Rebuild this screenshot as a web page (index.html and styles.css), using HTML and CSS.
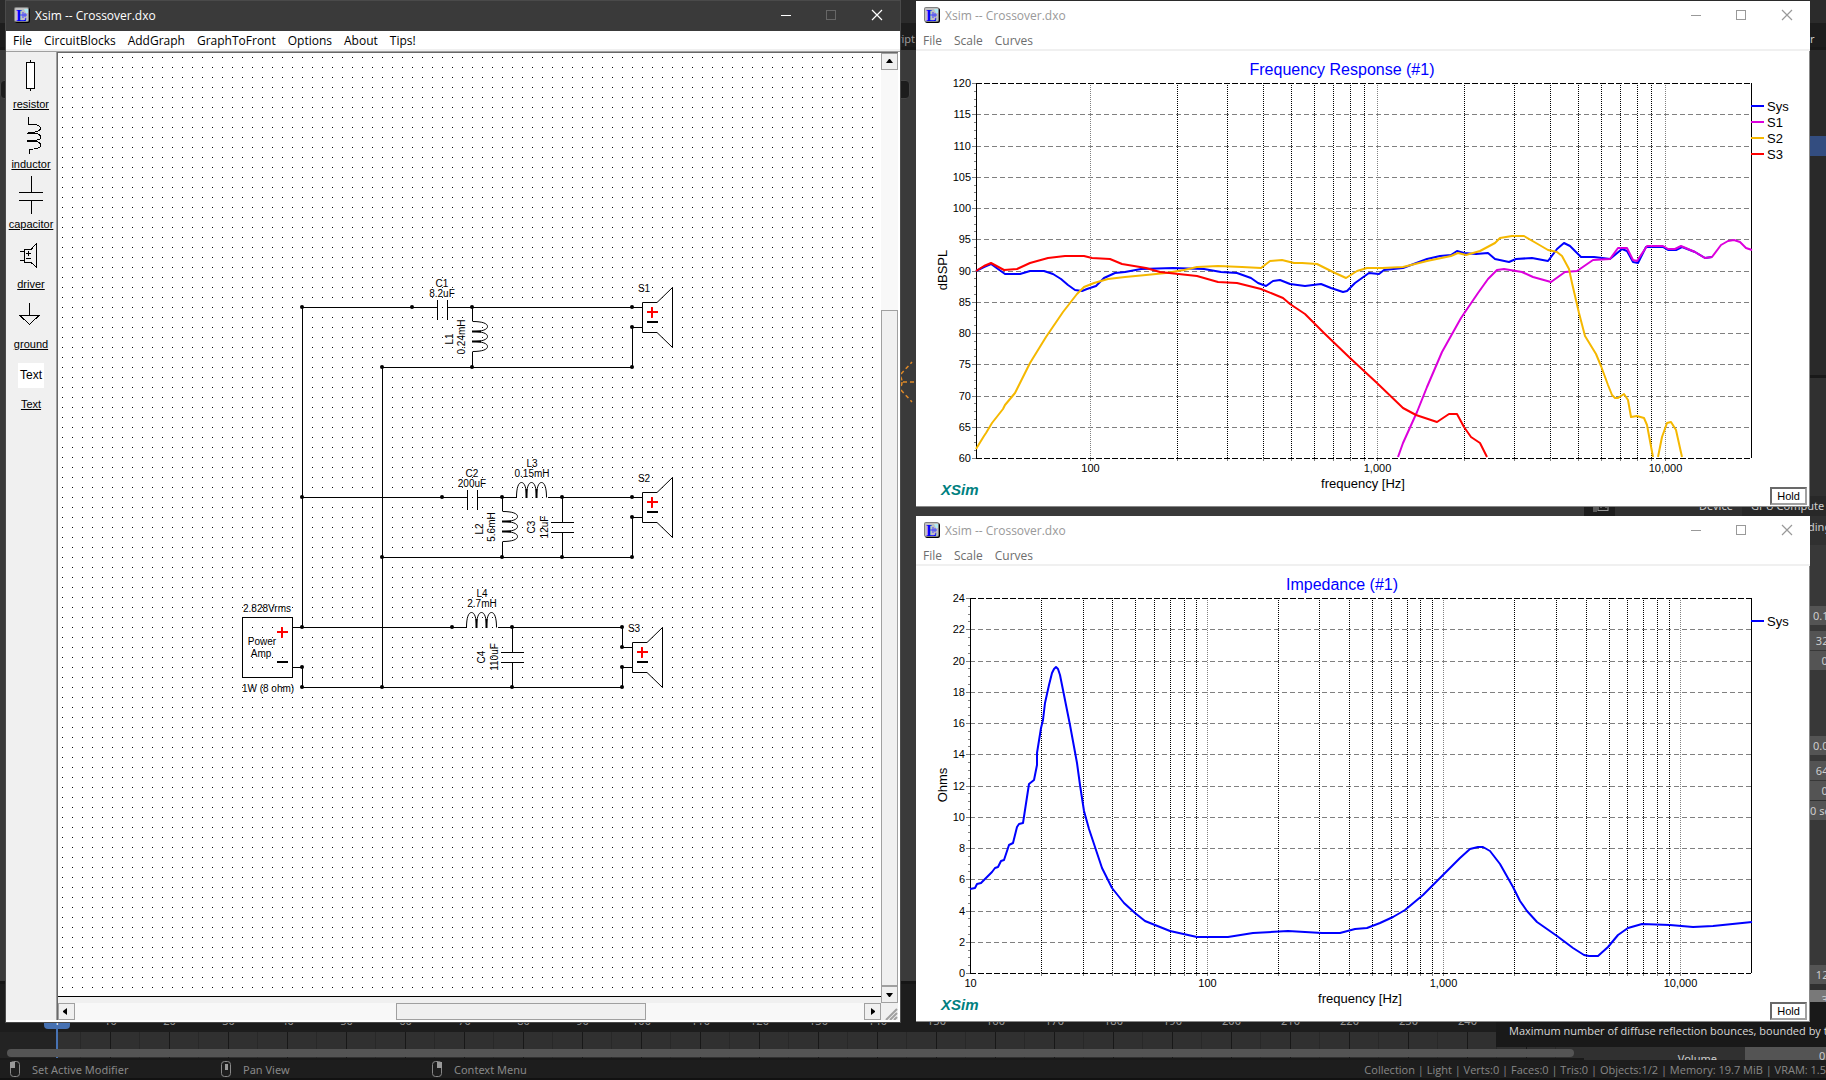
FILE: index.html
```html
<!DOCTYPE html>
<html lang="en">
<head>
  <meta charset="UTF-8">
  <meta name="viewport" content="width=device-width, initial-scale=1.0">
  <title>Xsim -- Crossover.dxo</title>
  <link rel="stylesheet" href="styles.css">
</head>
<body>
  <!-- shared symbols -->
  <svg class="defs" width="0" height="0" aria-hidden="true">
    <symbol id="app-icon" viewBox="0 0 16 16">
      <rect x="1" y="1" width="15" height="15" rx="2" fill="#000"/>
      <rect x="0" y="0" width="15" height="15" rx="2" fill="#808080"/>
      <rect x="1" y="1" width="13" height="13" rx="1" fill="#c0c0c0"/>
      <path d="M10 2h4v4h-2z" fill="#b0ecf4"/>
      <text x="2" y="14" font-family="Liberation Serif, serif" font-weight="bold" font-size="16" fill="#0000ff">L</text>
      <path d="M6 8h7M9 5v6M11 6v4" stroke="#4040ff" fill="none"/>
    </symbol>
    <symbol id="minimize" viewBox="0 0 46 30"><path d="M19 14.5h10" stroke="currentColor" fill="none"/></symbol>
    <symbol id="maximize" viewBox="0 0 46 30"><rect x="18.5" y="9.5" width="9" height="9" stroke="currentColor" fill="none"/></symbol>
    <symbol id="close" viewBox="0 0 46 30"><path d="M18 9l10 10M28 9l-10 10" stroke="currentColor" fill="none" stroke-width="1.2"/></symbol>
    <symbol id="coil" viewBox="0 0 18 32" overflow="visible">
      <path d="M.5 .5c10 0 15 2 15 5s-5 5-15 5M.5 10.5c10 0 15 2 15 5s-5 5-15 5M.5 20.5c10 0 15 2 15 5s-5 5-15 5" fill="none" stroke="#000"/>
      <path d="M0 10.5h9M0 20.5h9" stroke="#000" stroke-width="2"/>
    </symbol>
    <symbol id="speaker" viewBox="0 0 32 62" overflow="visible">
      <path d="M15 15.5H.5V45.5H15L30.5 60.5V.5L15 15.5" fill="none" stroke="#000"/>
      <path d="M5 25h11M10 20v11" stroke="#f00" stroke-width="2"/>
      <path d="M5 35h11" stroke="#000" stroke-width="2"/>
    </symbol>
  </svg>

  <!-- application behind the windows -->
  <div class="desktop">
    <div class="workspace">
      <div class="viewport">
        <div class="topbar"></div>
        <div class="tabs-row"><span class="tab-name">Script</span></div>
        <div class="tool-field"></div>
        <svg class="lamp" viewBox="0 0 60 60" fill="none" stroke="#e08a28" stroke-width="1.500" stroke-dasharray="4 3">
          <path d="M36 30h22M34 22l11-12M34 38l11 12"/>
          <circle cx="24" cy="30" r="11"/>
        </svg>
      </div>
      <div class="properties">
        <div class="topbar"></div>
        <div class="tabs-row"><span class="prop-edge">r</span></div>
        <div class="outliner"><div class="selected-row"></div></div>
        <div class="device-row">
          <svg class="render-icon" viewBox="0 0 30 20" fill="none" stroke="#999"><rect x="13.500" y="5.500" width="10" height="9"/><path d="M11.500 8v8M9.500 10v6M16 12l3-3 3 3"/></svg>
          <span class="device-label">Device</span><span class="device-value">GPU Compute</span>
        </div>
        <div class="panel-heading">Shading</div>
        <div class="group"><div class="prop">0.1</div></div>
        <div class="pair"><div class="prop">&nbsp;32</div><div class="prop">&nbsp;&nbsp;&nbsp;0</div></div>
        <div class="group"><div class="prop">0.0</div></div>
        <div class="pair"><div class="prop">&nbsp;64</div><div class="prop">&nbsp;&nbsp;&nbsp;0</div></div>
        <div class="prop seed">0 seed</div>
        <div class="group last"><div class="prop">&nbsp;12</div></div>
        <div class="prop hover">&nbsp;&nbsp;&nbsp;3</div>
        <div class="volume-row"><span>Volume</span><div class="volume-value">0</div></div>
      </div>
    </div>
    <div class="timeline">
      <div class="ruler" id="ruler"></div>
      <div class="tracks">
        <div class="before-start"></div>
        <div class="playhead"></div>
        <div class="time-scroll"></div>
      </div>
    </div>
    <div class="statusbar">
      <div class="hint"><svg viewBox="0 0 12 18"><rect x="1.500" y="1.500" width="9" height="15" rx="3" fill="none" stroke="#888"/><path d="M1 2h5v6H1z" fill="#999"/></svg>Set Active Modifier</div>
      <div class="hint"><svg viewBox="0 0 12 18"><rect x="1.500" y="1.500" width="9" height="15" rx="3" fill="none" stroke="#888"/><path d="M5 4h3v6H5z" fill="#999"/></svg>Pan View</div>
      <div class="hint"><svg viewBox="0 0 12 18"><rect x="1.500" y="1.500" width="9" height="15" rx="3" fill="none" stroke="#888"/><path d="M6 2h5v6H6z" fill="#999"/></svg>Context Menu</div>
      <div class="stats">Collection | Light | Verts:0 | Faces:0 | Tris:0 | Objects:1/2 | Memory: 19.7 MiB | VRAM: 1.5</div>
    </div>
    <div class="tooltip">Maximum number of diffuse reflection bounces, bounded by total</div>
  </div>

  <!-- circuit window -->
  <section class="window circuit-window">
    <header class="titlebar">
      <svg class="app-icon"><use href="#app-icon"/></svg>
      <span class="title">Xsim -- Crossover.dxo</span>
      <button class="win-btn" aria-label="Minimize"><svg><use href="#minimize"/></svg></button>
      <button class="win-btn disabled" aria-label="Maximize" disabled><svg><use href="#maximize"/></svg></button>
      <button class="win-btn" aria-label="Close"><svg><use href="#close"/></svg></button>
    </header>
    <nav class="menubar">
      <button>File</button><button>CircuitBlocks</button><button>AddGraph</button><button>GraphToFront</button><button>Options</button><button>About</button><button>Tips!</button>
    </nav>
    <div class="circuit-body">
      <aside class="parts">
        <button class="part">
          <svg viewBox="6 53 50 45"><path d="M30.500 60v2M30.500 89v2"/><rect x="26.500" y="62.500" width="8" height="26" fill="#fff"/></svg>
          <span class="part-name">resistor</span>
        </button>
        <button class="part">
          <svg viewBox="6 113 50 45"><path d="M28.500 117v7c8 0 12 2 12 4.500s-4 4-13 4M27 133.500h8M32 133c5 0 9 2 9 4s-4 4-14 4M27 141.500h8M32 141c5 0 9 2 9 4s-4 4-12 4.500v4"/></svg>
          <span class="part-name">inductor</span>
        </button>
        <button class="part">
          <svg viewBox="6 173 50 45"><path d="M31.500 176v16M19 192.500h24M19 200.500h24M31.500 200v14"/></svg>
          <span class="part-name">capacitor</span>
        </button>
        <button class="part">
          <svg viewBox="6 233 50 45"><path d="M20 251.500h5M20 260.500h5M31 249.500h-6.500v13H31L36.500 267V243.500L31 249.500M26 253.500h5M28.500 251v5M26 258.500h5"/></svg>
          <span class="part-name">driver</span>
        </button>
        <button class="part">
          <svg viewBox="6 293 50 45"><path d="M29.500 303v12M20 315.500h19l-9.500 9z"/></svg>
          <span class="part-name">ground</span>
        </button>
        <button class="part">
          <span class="text-icon">Text</span>
          <span class="part-name">Text</span>
        </button>
      </aside>

      <div class="canvas-area">
        <svg class="canvas">
          <defs>
            <pattern id="dots" width="10" height="10" patternUnits="userSpaceOnUse"><rect x="4" y="4" width="1" height="1"/></pattern>
          </defs>
          <rect width="100%" height="100%" fill="url(#dots)"/>
          <g transform="translate(-58 -53)">
            <g class="wires">
              <path d="M302.500 627V307.500H437M448 307.500H642M632.500 327.500H642M632.500 327V367.500H382.500V687M472.500 307V321M472.500 352V367"/>
              <path d="M302 497.500H467M478 497.500H516.500M547.500 497.500H642M632 517.500H642M632.500 517V557.500H382M502.500 497V511M502.500 542V557M562.500 497V522M562.500 533V557"/>
              <path d="M292 627.500H466.500M497.500 627.500H622.500V647.500H632M632 667.500H622.500V687.500H302.500V667.500H292M512.500 627V652M512.500 663V687"/>
              <!-- capacitor plates -->
              <path d="M437.500 300v20M447.500 300v20M467.500 490v20M477.500 490v20M551 522.500h23M551 532.500h23M501 652.500h23M501 662.500h23"/>
              <rect x="242.500" y="617.500" width="50" height="60"/>
            </g>
            <use href="#coil" x="472" y="321" width="18" height="32"/>
            <use href="#coil" x="502" y="511" width="18" height="32"/>
            <use href="#coil" width="18" height="32" transform="translate(516 498) rotate(-90)"/>
            <use href="#coil" width="18" height="32" transform="translate(466 628) rotate(-90)"/>
            <use href="#speaker" x="642" y="287" width="32" height="62"/>
            <use href="#speaker" x="642" y="477" width="32" height="62"/>
            <use href="#speaker" x="632" y="627" width="32" height="62"/>
            <path d="M277 632h11M282 627v11" stroke="#f00" stroke-width="2"/>
            <path d="M277 662h11" stroke="#000" stroke-width="2"/>
            <g id="junctions"></g>
            <g class="labels">
              <text x="442" y="287">C1</text><text x="442" y="297">8.2uF</text>
              <text x="644" y="292">S1</text>
              <text transform="translate(453 339) rotate(-90)">L1</text>
              <text transform="translate(465 337) rotate(-90)">0.24mH</text>
              <text x="472" y="477">C2</text><text x="472" y="487">200uF</text>
              <text x="532" y="467">L3</text><text x="532" y="477">0.15mH</text>
              <text x="644" y="482">S2</text>
              <text transform="translate(483 529) rotate(-90)">L2</text>
              <text transform="translate(495 527) rotate(-90)">5.6mH</text>
              <text transform="translate(535 527) rotate(-90)">C3</text>
              <text transform="translate(548 527) rotate(-90)">12uF</text>
              <text x="482" y="597">L4</text><text x="482" y="607">2.7mH</text>
              <text x="634" y="632">S3</text>
              <text transform="translate(485 657) rotate(-90)">C4</text>
              <text transform="translate(498 657) rotate(-90)">110uF</text>
              <text x="267" y="612">2.828Vrms</text>
              <text x="262" y="645">Power</text><text x="261" y="657">Amp</text>
              <text x="268" y="692">1W (8 ohm)</text>
            </g>
          </g>
        </svg>
        <div class="vscroll">
          <button class="scroll-btn" aria-label="Scroll up"><svg viewBox="0 0 15 15"><path d="M4 9h7l-3-4h-1z"/></svg></button>
          <div class="vthumb"></div>
          <button class="scroll-btn" aria-label="Scroll down"><svg viewBox="0 0 15 15"><path d="M4 6h7l-3 4h-1z"/></svg></button>
        </div>
        <div class="hscroll">
          <button class="scroll-btn" aria-label="Scroll left"><svg viewBox="0 0 15 15"><path d="M8 4v7l-4-3v-1z"/></svg></button>
          <div class="hthumb"></div>
          <button class="scroll-btn" aria-label="Scroll right"><svg viewBox="0 0 15 15"><path d="M6 4v7l4-3v-1z"/></svg></button>
        </div>
        <svg class="grip" viewBox="0 0 17 17"><path d="M5 17L16 6M9 17l7-7M13 17l3-3" stroke="#a0a0a0" stroke-width="2"/></svg>
      </div>
    </div>
  </section>

  <!-- frequency response window -->
  <section class="window graph-window response-window">
    <header class="titlebar">
      <svg class="app-icon"><use href="#app-icon"/></svg>
      <span class="title">Xsim -- Crossover.dxo</span>
      <button class="win-btn" aria-label="Minimize"><svg><use href="#minimize"/></svg></button>
      <button class="win-btn" aria-label="Maximize"><svg><use href="#maximize"/></svg></button>
      <button class="win-btn" aria-label="Close"><svg><use href="#close"/></svg></button>
    </header>
    <nav class="menubar"><button>File</button><button>Scale</button><button>Curves</button></nav>
    <div class="graph-body">
      <svg class="graph" id="response" viewBox="916 51 893 455"></svg>
      <button class="hold">Hold</button>
    </div>
  </section>

  <!-- impedance window -->
  <section class="window graph-window impedance-window">
    <header class="titlebar">
      <svg class="app-icon"><use href="#app-icon"/></svg>
      <span class="title">Xsim -- Crossover.dxo</span>
      <button class="win-btn" aria-label="Minimize"><svg><use href="#minimize"/></svg></button>
      <button class="win-btn" aria-label="Maximize"><svg><use href="#maximize"/></svg></button>
      <button class="win-btn" aria-label="Close"><svg><use href="#close"/></svg></button>
    </header>
    <nav class="menubar"><button>File</button><button>Scale</button><button>Curves</button></nav>
    <div class="graph-body">
      <svg class="graph" id="impedance" viewBox="916 566 893 455"></svg>
      <button class="hold">Hold</button>
    </div>
  </section>

  <script src="script.js"></script>
</body>
</html>
```

FILE: styles.css
```css
* {
  box-sizing: border-box;
}
body {
  margin: 0;
  height: 100vh;
  overflow: hidden;
  background: #1d1d1d;
  font-family: 'Open Sans', 'Noto Sans', sans-serif;
  font-size: 12px;
}
button {
  margin: 0;
  padding: 0;
  border: 0;
  background: none;
  color: inherit;
  font: inherit;
}
svg {
  display: block;
}
.defs {
  position: absolute;
}

/* application behind the windows */
.desktop {
  position: relative;
  display: flex;
  flex-direction: column;
  height: 100vh;
  overflow: hidden;
  color: #ccc;
  font-family: 'Noto Sans', sans-serif;
  font-size: 11px;
}
.workspace {
  flex: 1;
  display: flex;
  min-height: 0;
}
.viewport {
  position: relative;
  flex: 1;
  background: #3a3a3a;
  border-bottom: 3px solid #161616;
  margin-bottom: 76px;
}
.topbar {
  height: 23px;
  background: #2b2b2b;
}
.tabs-row {
  height: 27px;
  background: #1d1d1d;
  border-bottom: 3px solid #191919;
  line-height: 32px;
}
.tab-name {
  display: block;
  width: 915px;
  text-align: right;
  color: #999;
}
.tool-field {
  width: 910px;
  height: 19px;
  margin-top: 30px;
  border: 1px solid #444;
  border-radius: 4px;
  background: #1d1d1d;
}
.lamp {
  position: absolute;
  left: 867px;
  top: 352px;
  width: 60px;
  height: 60px;
}
.properties {
  display: flex;
  flex-direction: column;
  width: 242px;
  overflow: hidden;
  white-space: nowrap;
  background: #303030;
}
.prop-edge {
  padding-left: 226px;
}
.outliner {
  height: 328px;
  padding-top: 86px;
  background: #292929;
  border-bottom: 3px solid #191919;
}
.selected-row {
  height: 20px;
  background: #334d80;
}
.device-row {
  display: flex;
  align-items: center;
  height: 20px;
  margin-top: 118px;
  line-height: 20px;
}
.render-icon {
  width: 31px;
  height: 20px;
  background: #1d1d1d;
  margin-right: 84px;
}
.device-label {
  width: 43px;
}
.device-value {
  flex: 1;
  padding-left: 9px;
  background: #282828;
}
.panel-heading {
  height: 29px;
  padding-left: 205px;
  line-height: 22px;
  background: #303030;
}
.group {
  padding-top: 61px;
  background: #383838;
}
.pair {
  display: flex;
  flex-direction: column;
  gap: 1px;
  padding-top: 6px;
  background: #383838;
}
.pair + .group {
  padding-top: 66px;
}
.prop {
  height: 19px;
  padding-left: 229px;
  line-height: 19px;
  background: #545454;
}
.seed {
  margin-top: 1px;
  padding-left: 226px;
}
.group.last {
  padding-top: 145px;
}
.hover {
  margin-top: 6px;
  background: #797979;
}
.volume-row {
  display: flex;
  flex: 1;
  align-items: flex-end;
  justify-content: flex-end;
  line-height: 18px;
  gap: 28px;
  margin-bottom: -8px;
}
.volume-value {
  width: 81px;
  height: 21px;
  padding-left: 74px;
  background: #545454;
}
.timeline {
  position: relative;
  height: 51px;
  margin-top: -51px;
  width: calc(100% - 242px);
  background: #1d1d1d;
  overflow: hidden;
}
.ruler {
  display: flex;
  height: 23px;
  padding-left: 22px;
  line-height: 23px;
  color: #999;
}
.ruler span {
  flex: none;
  width: 59px;
  text-align: center;
}
.ruler span.current {
  width: 26px;
  height: 20px;
  margin: 0 11px 0 22px;
  border-radius: 4px;
  background: #4772b3;
  color: #fff;
}
.tracks {
  position: relative;
  height: 28px;
  border-bottom: 2px solid #191919;
  background: repeating-linear-gradient(90deg, #181818 0, #181818 1px, #303030 1px, #303030 29px, #282828 29px, #282828 30px, #303030 30px, #303030 59px) 51px 0;
}
.before-start {
  position: absolute;
  width: 57px;
  height: 26px;
  background: #232323;
}
.playhead {
  position: absolute;
  left: 56px;
  top: -4px;
  width: 2px;
  height: 30px;
  background: #4772b3;
}
.time-scroll {
  position: absolute;
  left: 7px;
  right: 10px;
  top: 17px;
  height: 8px;
  border-radius: 4px;
  background: #545454;
}
.statusbar {
  display: flex;
  align-items: center;
  height: 20px;
  padding-left: 9px;
  background: #1d1d1d;
  border-bottom: 2px solid #111;
  color: #888;
  white-space: nowrap;
}
.hint {
  display: flex;
  flex: none;
  align-items: center;
  gap: 11px;
  width: 211px;
}
.hint svg {
  width: 12px;
  height: 18px;
}
.stats {
  margin-left: auto;
  font-family: 'Open Sans', 'Noto Sans', sans-serif;
}
.tooltip {
  position: absolute;
  right: 0;
  bottom: 33px;
  width: 330px;
  height: 45px;
  padding: 20px 0 0 13px;
  overflow: hidden;
  background: #191919;
  color: #d8d8d8;
  font-family: 'Open Sans', 'Noto Sans', sans-serif;
  line-height: 18px;
  white-space: nowrap;
}

/* windows */
.window {
  position: absolute;
  display: flex;
  flex-direction: column;
  background: #fff;
}
.titlebar {
  display: flex;
  align-items: center;
  height: 30px;
  flex: none;
}
.app-icon {
  width: 16px;
  height: 16px;
  margin: 0 5px 2px 8px;
}
.title {
  flex: 1;
  padding-bottom: 2px;
}
.win-btn {
  width: 46px;
  height: 30px;
}
.win-btn svg {
  width: 46px;
  height: 30px;
}
.win-btn.disabled {
  color: #666;
}
.menubar {
  display: flex;
  flex: none;
  gap: 12px;
  height: 20px;
  padding-left: 7px;
  border-bottom: 2px solid #f0f0f0;
  line-height: 20px;
}
.circuit-window {
  left: 5px;
  right: 925px;
  top: 0;
  bottom: 57px;
  border: 1px solid #4a4a4a;
}
.circuit-window .titlebar {
  background: #3a3a3a;
  color: #fff;
}
.circuit-body {
  display: flex;
  flex: 1;
  min-height: 0;
  padding: 0 2px 2px 0;
  border-top: 1px solid #a0a0a0;
}
.parts {
  width: 51px;
  flex: none;
  padding-top: 1px;
  background: #f0f0f0;
  border-right: 1px solid #a0a0a0;
}
.part {
  display: flex;
  flex-direction: column;
  align-items: center;
  width: 50px;
  height: 60px;
  font-family: 'Liberation Sans', Arial, sans-serif;
  font-size: 11px;
  line-height: 13px;
}
.part svg {
  width: 50px;
  height: 45px;
  fill: none;
  stroke: #000;
  shape-rendering: crispEdges;
}
.part-name {
  text-decoration: underline;
}
.text-icon {
  width: 26px;
  height: 25px;
  margin: 10px 0;
  background: #fff;
  font-size: 12px;
  line-height: 24px;
}
.canvas-area {
  display: grid;
  flex: 1;
  grid-template-columns: 1fr 17px;
  grid-template-rows: 1fr 23px;
  min-width: 0;
  background: #f0f0f0;
  border-top: 1px solid #696969;
  border-left: 1px solid #696969;
}
.canvas {
  grid-area: 1 / 1;
  width: 100%;
  height: 100%;
  background: #fff;
  border-bottom: 1px solid #000;
}
.wires {
  fill: none;
  stroke: #000;
  shape-rendering: crispEdges;
}
.labels {
  font-family: 'Liberation Sans', Arial, sans-serif;
  font-size: 10px;
  text-anchor: middle;
}
.vscroll {
  grid-area: 1 / 2;
  display: flex;
  flex-direction: column;
  justify-content: space-between;
  margin-bottom: -6px;
  background: #f8f8f8;
}
.vthumb {
  flex: none;
  height: calc(100% - 274px);
  margin-top: auto;
  border: 1px solid #a0a0a0;
  background: #f0f0f0;
}
.hscroll {
  grid-area: 2 / 1;
  display: flex;
  justify-content: space-between;
  margin-top: 6px;
  background: #f8f8f8;
}
.hthumb {
  width: 250px;
  margin-left: 103px;
  border: 1px solid #a0a0a0;
  background: #f0f0f0;
}
.scroll-btn {
  flex: none;
  width: 17px;
  height: 17px;
  border: 1px solid #a0a0a0;
  background: #f0f0f0;
}
.scroll-btn svg {
  width: 15px;
  height: 15px;
}
.grip {
  grid-area: 2 / 2;
  align-self: end;
  width: 17px;
  height: 17px;
}

.graph-window {
  left: 916px;
  right: 16px;
  height: 506px;
}
.response-window {
  top: 1px;
}
.impedance-window {
  top: 516px;
}
.graph-window .titlebar {
  color: #999;
}
.graph-window .menubar {
  color: #6d6d6d;
}
.graph-body {
  position: relative;
  flex: 1;
  min-height: 0;
  border-right: 1px solid #888;
  border-bottom: 1px solid #888;
}
.graph {
  width: 100%;
  height: 100%;
  font-family: 'Liberation Sans', Arial, sans-serif;
  font-size: 11px;
}
.graph-title {
  font-size: 16px;
  fill: #0000ff;
  text-anchor: middle;
}
.axis-title,
.legend {
  font-size: 13px;
}
.middle {
  text-anchor: middle;
}
.end {
  text-anchor: end;
}
.brand {
  font-size: 15px;
  font-weight: bold;
  font-style: italic;
  fill: #008080;
}
.curve {
  fill: none;
  stroke-width: 2;
  stroke-linejoin: round;
}
.grid {
  shape-rendering: crispEdges;
}
.hold {
  position: absolute;
  right: 2px;
  bottom: 1px;
  width: 37px;
  height: 18px;
  border: 2px solid #a0a0a0;
  border-top-color: #696969;
  border-left-color: #696969;
  background: #fff;
  color: #000;
  font-family: 'Liberation Sans', Arial, sans-serif;
  font-size: 11px;
  line-height: 14px;
}
```

FILE: script.js
```js
const NS = 'http://www.w3.org/2000/svg';

function add(parent, tag, attrs, text) {
  const el = document.createElementNS(NS, tag);
  for (const key in attrs) el.setAttribute(key, attrs[key]);
  if (text !== undefined) el.textContent = text;
  parent.appendChild(el);
  return el;
}

// timeline ruler
const ruler = document.getElementById('ruler');
for (let frame = 0; frame <= 240; frame += 10) {
  const span = document.createElement('span');
  span.textContent = frame === 0 ? 1 : frame;
  if (frame === 0) span.className = 'current';
  ruler.appendChild(span);
}

// wire junctions
const junctions = [
  [302, 307], [412, 307], [472, 307], [632, 307], [632, 327], [382, 367], [472, 367], [632, 367],
  [302, 497], [442, 497], [502, 497], [562, 497], [632, 497], [632, 517], [382, 557], [502, 557], [562, 557], [632, 557],
  [302, 627], [452, 627], [512, 627], [622, 627], [622, 647], [622, 667], [302, 667], [302, 687], [382, 687], [512, 687], [622, 687]
];
junctions.forEach(([x, y]) => {
  add(document.getElementById('junctions'), 'circle', { cx: x, cy: y, r: 2 });
});

const series = {
  sys: '976,271 984,267 991,264 998,269 1005,274 1020,274 1030,271 1044,271 1053,274 1061,279 1068,285 1075,290 1082,291 1087,289 1096,286 1104,278 1115,273 1125,272 1141,269 1173,268 1204,269 1221,272 1237,273 1251,278 1258,283 1266,286 1273,281 1280,280 1290,284 1305,286 1321,284 1331,288 1343,292 1347,291 1355,283 1369,273 1379,274 1384,270 1403,268 1427,259 1440,256 1451,255 1457,251 1464,253 1476,254 1488,253 1495,259 1509,262 1516,259 1532,258 1548,261 1557,249 1564,243 1570,246 1581,257 1594,257 1610,259 1622,249 1627,251 1633,262 1638,263 1646,247 1663,247 1668,250 1676,250 1682,247 1695,252 1705,258 1712,257',
  s1: '1398,457 1403,443 1417,412 1427,387 1442,352 1461,318 1478,293 1488,279 1497,270 1504,269 1522,272 1533,277 1551,282 1565,272 1577,271 1593,260 1610,259 1618,248 1627,248 1633,260 1637,261 1647,246 1663,246 1668,249 1675,249 1681,246 1695,252 1705,258 1712,257 1721,245 1728,241 1734,240 1740,242 1746,248 1752,250',
  s2: '976,449 984,436 986,433 992,423 1003,409 1005,405 1015,393 1022,379 1030,363 1046,337 1063,312 1077,294 1084,287 1094,283 1108,279 1125,277 1146,275 1166,273 1184,270 1197,267 1218,266 1242,267 1261,268 1270,261 1282,260 1294,263 1302,263 1317,264 1333,272 1346,278 1357,271 1367,268 1382,268 1403,267 1427,261 1451,256 1458,253 1466,255 1480,251 1495,243 1500,238 1512,236 1524,236 1536,243 1548,250 1557,252 1562,256 1569,269 1572,283 1579,313 1585,336 1596,354 1601,366 1608,385 1612,395 1615,398 1618,398 1624,394 1628,400 1631,417 1637,416 1644,418 1647,425 1653,457',
  s2tail: '1658,457 1662,437 1667,423 1671,422 1676,430 1682,457',
  s3: '976,271 984,266 991,263 1004,270 1017,269 1030,263 1048,258 1065,256 1084,256 1092,258 1110,259 1122,264 1146,268 1160,272 1197,276 1218,282 1237,283 1261,289 1283,298 1290,304 1305,314 1324,333 1350,358 1377,383 1403,408 1416,415 1437,422 1449,414 1457,414 1464,427 1471,437 1480,443 1487,457',
  ohms: '970,889 975,888 977,884 981,883 987,877 992,872 995,868 998,867 1001,861 1004,860 1009,845 1013,843 1017,827 1019,824 1023,823 1029,784 1034,780 1037,765 1037,753 1041,728 1043,720 1045,703 1049,685 1052,673 1054,669 1056,667 1058,669 1060,675 1063,690 1070,725 1077,763 1080,785 1084,811 1089,829 1095,847 1102,868 1112,888 1124,903 1135,913 1145,921 1160,927 1170,931 1197,937 1228,937 1253,933 1288,931 1322,933 1340,933 1355,929 1367,928 1380,923 1393,917 1405,910 1423,895 1443,875 1460,858 1470,849 1478,847 1483,847 1490,851 1500,864 1513,887 1520,901 1527,911 1537,922 1557,936 1573,948 1584,955 1589,956 1598,956 1608,947 1618,935 1628,928 1642,924 1670,925 1693,927 1713,926 1752,922'
};

function drawGraph(id, o) {
  const svg = document.getElementById(id);
  const right = 1751, bottom = o.top + 375;
  const grid = add(svg, 'g', { class: 'grid' });
  const px = hz => Math.round(o.left + (right - o.left) * Math.log10(hz / o.minHz) / Math.log10(20000 / o.minHz));
  const line = (x1, y1, x2, y2, stroke, dash) =>
    add(grid, 'line', { x1, y1, x2, y2, stroke, 'stroke-dasharray': dash || 'none' });

  // horizontal grid, ticks and values
  const steps = (o.max - o.min) / o.step;
  for (let i = 0; i <= steps; i++) {
    const y = Math.round(o.top + i * 375 / steps) + 0.5;
    line(o.left - 4, y, o.left, y, '#808080');
    line(o.left, y, right, y, '#808080', '5 3');
    if (i < steps) {
      for (let k = 1; k < 4; k++) {
        const ty = Math.round(o.top + (i + k / 4) * 375 / steps) + 0.5;
        line(o.left - 2, ty, o.left, ty, '#808080');
      }
    }
    add(svg, 'text', { x: o.left - 5, y: y + 3.5, class: 'end' }, o.max - i * o.step);
  }

  // logarithmic vertical grid
  for (let decade = 10; decade <= 10000; decade *= 10) {
    for (let n = 1; n < 10; n++) {
      const hz = decade * n;
      if (hz < o.minHz || hz >= 20000) continue;
      const x = px(hz) + 0.5;
      if (hz > o.minHz && !(o.minHz === 40 && hz < 100)) {
        line(x, o.top, x, bottom, n === 1 ? '#808080' : '#000', '1 1');
        line(x, bottom, x, bottom + 3, '#808080');
      }
      if (n === 1) add(svg, 'text', { x, y: bottom + 14, class: 'middle' }, hz.toLocaleString('en-US'));
    }
  }

  line(o.left + 0.5, o.top, o.left + 0.5, bottom, '#000');
  line(right + 0.5, o.top, right + 0.5, bottom, '#000');
  line(o.left, o.top + 0.5, right, o.top + 0.5, '#000', '6 2');
  line(o.left, bottom + 0.5, right, bottom + 0.5, '#000', '6 2');

  o.curves.forEach(([name, color]) => add(svg, 'polyline', { points: series[name], stroke: color, class: 'curve' }));

  o.legend.forEach(([name, color], i) => {
    const y = o.top + 23 + i * 16;
    line(right, y, right + 13, y, color).setAttribute('stroke-width', 2);
    add(svg, 'text', { x: right + 16, y: y + 5, class: 'legend' }, name);
  });

  add(svg, 'text', { x: o.titleX, y: o.top - 8, class: 'graph-title' }, o.title);
  add(svg, 'text', { x: o.axisX, y: bottom + 30, class: 'axis-title middle' }, 'frequency [Hz]');
  add(svg, 'text', { transform: `translate(947 ${o.top + 187}) rotate(-90)`, class: 'axis-title middle' }, o.unit);
  add(svg, 'text', { x: 941, y: bottom + 37, class: 'brand' }, 'XSim');
}

drawGraph('response', {
  top: 83, left: 976, minHz: 40, min: 60, max: 120, step: 5,
  title: 'Frequency Response (#1)', titleX: 1342, axisX: 1363, unit: 'dBSPL',
  curves: [['sys', '#0000ff'], ['s1', '#dc00dc'], ['s2', '#f5b800'], ['s2tail', '#f5b800'], ['s3', '#ff0000']],
  legend: [['Sys', '#0000ff'], ['S1', '#dc00dc'], ['S2', '#f5b800'], ['S3', '#ff0000']]
});

drawGraph('impedance', {
  top: 598, left: 970, minHz: 10, min: 0, max: 24, step: 2,
  title: 'Impedance (#1)', titleX: 1342, axisX: 1360, unit: 'Ohms',
  curves: [['ohms', '#0000ff']],
  legend: [['Sys', '#0000ff']]
});
```
